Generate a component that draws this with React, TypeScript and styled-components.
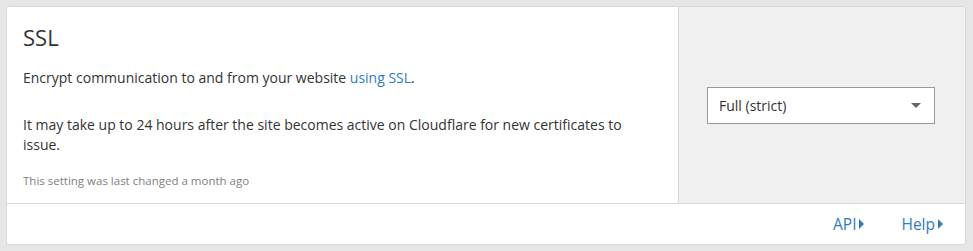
import styled, { createGlobalStyle } from "styled-components"

const GlobalStyle = createGlobalStyle`
body {
    margin: 0;
    background: #e6e6e6;
    font-family: "Open Sans", "Liberation Sans", sans-serif;
    color: #333;
}
`

const Page = styled.div`
padding: 6px 7px 7px 6px;
`

const Card = styled.section`
background: #fff;
border: 1px solid #d9d9d9;
border-radius: 3px;
overflow: hidden;
`

const Body = styled.div`
display: flex;
height: 196px;
border-bottom: 1px solid #d9d9d9;
`

const Main = styled.div`
flex: 1;
padding: 15px 16px 0 16px;
`

const Title = styled.h3`
margin: 0 0 16px;
font-size: 22px;
font-weight: 400;
line-height: 30px;
color: #333;
`

const Text = styled.p`
margin: 0 0 27px;
font-size: 14px;
line-height: 20px;
`

const Link = styled.a`
color: #2f7bbf;
text-decoration: none;
`

const Meta = styled.p`
margin: -9px 0 0;
font-size: 11.5px;
line-height: 16px;
color: #808080;
`

const Side = styled.div`
width: 286px;
background: #f0f0f0;
border-left: 1px solid #d9d9d9;
display: flex;
align-items: center;
justify-content: center;
`

const Select = styled.div`
width: 228px;
height: 37px;
box-sizing: border-box;
background: #fff;
border: 1px solid #999;
display: flex;
align-items: center;
justify-content: space-between;
padding: 0 13px 0 11px;
font-size: 14px;
color: #333;
margin-right: 2px;
`

const Caret = styled.span`
width: 0;
height: 0;
border-left: 5px solid transparent;
border-right: 5px solid transparent;
border-top: 5px solid #666;
`

const Footer = styled.div`
height: 40px;
display: flex;
align-items: center;
justify-content: flex-end;
gap: 37px;
padding-right: 22px;
`

const FooterLink = styled.a`
color: #2f7bbf;
font-size: 15.5px;
text-decoration: none;
display: flex;
align-items: center;
gap: 3px;
`

const Arrow = styled.span`
width: 0;
height: 0;
border-top: 5px solid transparent;
border-bottom: 5px solid transparent;
border-left: 5px solid #2f7bbf;
`

export default function App() {
    return (
        <>
            <GlobalStyle />
            <Page>
                <Card>
                    <Body>
                        <Main>
                            <Title>SSL</Title>
                            <Text>Encrypt communication to and from your website <Link href="#">using SSL</Link>.</Text>
                            <Text>It may take up to 24 hours after the site becomes active on Cloudflare for new certificates to issue.</Text>
                            <Meta>This setting was last changed a month ago</Meta>
                        </Main>
                        <Side>
                            <Select>
                                <span>Full (strict)</span>
                                <Caret />
                            </Select>
                        </Side>
                    </Body>
                    <Footer>
                        <FooterLink href="#">API<Arrow /></FooterLink>
                        <FooterLink href="#">Help<Arrow /></FooterLink>
                    </Footer>
                </Card>
            </Page>
        </>
    )
}
